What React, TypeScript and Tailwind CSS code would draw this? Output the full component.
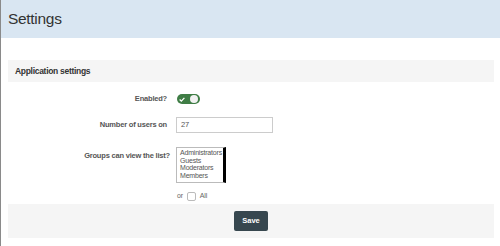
export default function App() {
	return (
		<div className="w-[500px] h-[246px] overflow-hidden bg-white border-l border-[#8a8a8a] font-['Liberation_Sans',Arial,sans-serif]">
			<div className="h-[38px] bg-[#d9e6f2] flex items-center px-[7px]">
				<h1 className="text-[15.5px] tracking-[-0.3px] text-[#333] leading-none">Settings</h1>
			</div>
			<div className="pl-[7px] pr-[6px] pt-[22px]">
				<div className="h-[22px] bg-[#f5f5f5] flex items-center px-[7px]">
					<span className="text-[8.5px] tracking-[-0.3px] font-bold text-[#333]">Application settings</span>
				</div>
				<div className="flex flex-col text-[7.5px] tracking-[-0.2px]">
					<div className="flex items-center mt-[12px] h-[10px]">
						<div className="w-[159px] text-right font-bold text-[#555]">Enabled?</div>
						<div className="ml-[10px] w-[23px] h-[10px] rounded-full bg-[#3f7d45] flex items-center justify-between px-[2px]">
							<svg width="6" height="5" viewBox="0 0 6 5">
								<path d="M0.6 2.6 L2.3 4.1 L5.4 0.9" fill="none" stroke="white" strokeWidth="1.3" />
							</svg>
							<div className="w-[8px] h-[8px] rounded-full bg-[#f2f2f2]" />
						</div>
					</div>
					<div className="flex items-center mt-[13px] h-[16px]">
						<div className="w-[159px] text-right font-bold text-[#555]">Number of users on</div>
						<div className="ml-[9px] w-[97px] h-[16px] border border-[#ccc] flex items-center px-[4px] text-[7.5px] text-[#555]">27</div>
					</div>
					<div className="flex items-start mt-[14px]">
						<div className="w-[162px] text-right font-bold text-[#555] mt-[3px]">Groups can view the list?</div>
						<div className="ml-[6px] w-[50px] h-[36px] border border-[#bbb] border-r-[3px] border-r-black pl-[3px] pt-[1px] text-[7px] leading-[7.7px] text-[#555] overflow-hidden whitespace-nowrap">
							<div>Administrators</div>
							<div>Guests</div>
							<div>Moderators</div>
							<div>Members</div>
						</div>
					</div>
					<div className="flex items-center mt-[8px] h-[10px] pl-[169px] text-[7px] text-[#666]">
						<span>or</span>
						<span className="ml-[4px] w-[9px] h-[9px] border border-[#bbb] rounded-[2px] bg-white" />
						<span className="ml-[4px]">All</span>
					</div>
				</div>
				<div className="mt-[3px] h-[34px] bg-[#f5f5f5] flex items-center justify-center">
					<button className="w-[34px] h-[20px] bg-[#37474f] text-white text-[7.5px] font-bold rounded-[2px]">Save</button>
				</div>
			</div>
		</div>
	);
}
